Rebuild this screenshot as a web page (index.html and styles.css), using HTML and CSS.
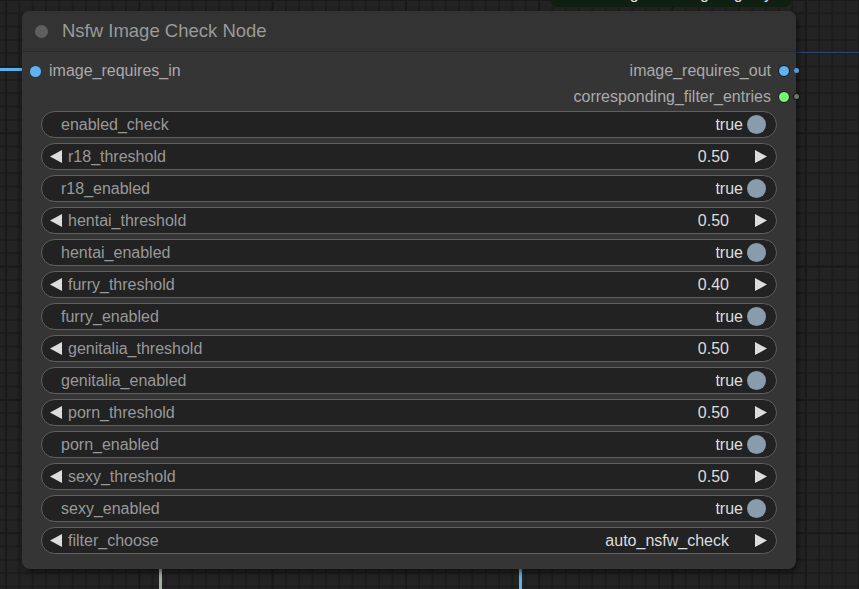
FILE: index.html
```html
<!DOCTYPE html>
<html>
<head>
<meta charset="utf-8">
<link rel="stylesheet" href="styles.css">
</head>
<body>
<div class="canvas">
  <div class="wire wire-in"></div>
  <div class="wire wire-h"></div>
  <div class="wire wire-v1"></div>
  <div class="wire wire-v2"></div>
  <div class="other-node"><span class="other-text">Image Filtering Registry</span></div>

  <div class="node">
    <div class="title">
      <span class="title-dot"></span>
      <span class="title-text">Nsfw Image Check Node</span>
    </div>
    <div class="slots">
      <div class="slot-row">
        <div class="slot slot-in"><span class="dot dot-blue"></span><span class="slot-label">image_requires_in</span></div>
        <div class="slot slot-out"><span class="slot-label">image_requires_out</span><span class="dot dot-blue dot-out"></span></div>
      </div>
      <div class="slot-row slot-row-end">
        <div class="slot slot-out"><span class="slot-label">corresponding_filter_entries</span><span class="dot dot-green dot-out"></span></div>
      </div>
    </div>

    <div class="widgets">
      <div class="w toggle"><span class="w-label">enabled_check</span><span class="w-value">true</span><span class="knob"></span></div>
      <div class="w num"><svg class="arr" viewBox="0 0 12 13"><polygon points="12,0 12,13 0,6.5"/></svg><span class="w-label">r18_threshold</span><span class="w-value">0.50</span><svg class="arr arr-r" viewBox="0 0 12 13"><polygon points="0,0 0,13 12,6.5"/></svg></div>
      <div class="w toggle"><span class="w-label">r18_enabled</span><span class="w-value">true</span><span class="knob"></span></div>
      <div class="w num"><svg class="arr" viewBox="0 0 12 13"><polygon points="12,0 12,13 0,6.5"/></svg><span class="w-label">hentai_threshold</span><span class="w-value">0.50</span><svg class="arr arr-r" viewBox="0 0 12 13"><polygon points="0,0 0,13 12,6.5"/></svg></div>
      <div class="w toggle"><span class="w-label">hentai_enabled</span><span class="w-value">true</span><span class="knob"></span></div>
      <div class="w num"><svg class="arr" viewBox="0 0 12 13"><polygon points="12,0 12,13 0,6.5"/></svg><span class="w-label">furry_threshold</span><span class="w-value">0.40</span><svg class="arr arr-r" viewBox="0 0 12 13"><polygon points="0,0 0,13 12,6.5"/></svg></div>
      <div class="w toggle"><span class="w-label">furry_enabled</span><span class="w-value">true</span><span class="knob"></span></div>
      <div class="w num"><svg class="arr" viewBox="0 0 12 13"><polygon points="12,0 12,13 0,6.5"/></svg><span class="w-label">genitalia_threshold</span><span class="w-value">0.50</span><svg class="arr arr-r" viewBox="0 0 12 13"><polygon points="0,0 0,13 12,6.5"/></svg></div>
      <div class="w toggle"><span class="w-label">genitalia_enabled</span><span class="w-value">true</span><span class="knob"></span></div>
      <div class="w num"><svg class="arr" viewBox="0 0 12 13"><polygon points="12,0 12,13 0,6.5"/></svg><span class="w-label">porn_threshold</span><span class="w-value">0.50</span><svg class="arr arr-r" viewBox="0 0 12 13"><polygon points="0,0 0,13 12,6.5"/></svg></div>
      <div class="w toggle"><span class="w-label">porn_enabled</span><span class="w-value">true</span><span class="knob"></span></div>
      <div class="w num"><svg class="arr" viewBox="0 0 12 13"><polygon points="12,0 12,13 0,6.5"/></svg><span class="w-label">sexy_threshold</span><span class="w-value">0.50</span><svg class="arr arr-r" viewBox="0 0 12 13"><polygon points="0,0 0,13 12,6.5"/></svg></div>
      <div class="w toggle"><span class="w-label">sexy_enabled</span><span class="w-value">true</span><span class="knob"></span></div>
      <div class="w num"><svg class="arr" viewBox="0 0 12 13"><polygon points="12,0 12,13 0,6.5"/></svg><span class="w-label">filter_choose</span><span class="w-value">auto_nsfw_check</span><svg class="arr arr-r" viewBox="0 0 12 13"><polygon points="0,0 0,13 12,6.5"/></svg></div>
    </div>

    <span class="stub stub-blue"></span>
    <span class="stub stub-gray"></span>
  </div>
</div>
</body>
</html>
```

FILE: styles.css
```css
html, body {
  margin: 0;
  padding: 0;
}

body {
  width: 859px;
  height: 589px;
  overflow: hidden;
  font-family: "Liberation Sans", Arial, sans-serif;
}

.canvas {
  position: relative;
  width: 859px;
  height: 589px;
  overflow: hidden;
  background-color: #232323;
  background-image:
    linear-gradient(#191919 2px, transparent 2px),
    linear-gradient(90deg, #191919 2px, transparent 2px),
    linear-gradient(#1c1c1c 2px, transparent 2px),
    linear-gradient(90deg, #1c1c1c 2px, transparent 2px);
  background-size: 133.333px 133.333px, 133.333px 133.333px, 13.333px 13.333px, 13.333px 13.333px;
  background-position: 5px -1px, 5px -1px, 5px -1px, 5px -1px;
}

.wire {
  position: absolute;
}

.wire-in {
  left: 0;
  top: 68px;
  width: 30px;
  height: 3px;
  background: #5bb0ee;
}

.wire-h {
  left: 700px;
  top: 52px;
  width: 159px;
  height: 1px;
  background: #2b4a72;
}

.wire-v1 {
  left: 159px;
  top: 540px;
  width: 3px;
  height: 60px;
  background: #9fb09e;
}

.wire-v2 {
  left: 519px;
  top: 540px;
  width: 3px;
  height: 60px;
  background: #5bb0ee;
}

.other-node {
  position: absolute;
  left: 550px;
  top: -30px;
  width: 242px;
  height: 37px;
  background: #0f1f12;
  border-radius: 8px;
  overflow: hidden;
}

.other-text {
  position: absolute;
  right: 20px;
  top: 15px;
  font-size: 16px;
  color: #ddd;
  white-space: nowrap;
}

.node {
  position: absolute;
  left: 22px;
  top: 11px;
  width: 774px;
  height: 558px;
  box-sizing: border-box;
  background: #353535;
  border-radius: 8px;
  box-shadow: 2px 3px 6px rgba(0, 0, 0, 0.55);
  display: flex;
  flex-direction: column;
}

.title {
  height: 40px;
  display: flex;
  align-items: center;
  padding-left: 13px;
  background: #333333;
  border-radius: 8px 8px 0 0;
  border-bottom: 1px solid #2a2a2a;
}

.title-dot {
  width: 13px;
  height: 13px;
  border-radius: 50%;
  background: #5f5f5f;
  margin-right: 14px;
}

.title-text {
  font-size: 18.5px;
  color: #9a9a9a;
  line-height: 1;
}

.slots {
  padding-top: 6px;
  height: 53px;
  display: flex;
  flex-direction: column;
}

.slot-row {
  height: 26px;
  display: flex;
  justify-content: space-between;
  align-items: center;
}

.slot-row-end {
  justify-content: flex-end;
}

.slot {
  display: flex;
  align-items: center;
}

.slot-in {
  padding-left: 8px;
  gap: 8px;
}

.slot-out {
  padding-right: 6px;
  gap: 7px;
}

.slot-label {
  font-size: 16px;
  color: #aaaaaa;
}

.dot {
  display: block;
  width: 11px;
  height: 11px;
  border-radius: 50%;
  box-sizing: border-box;
}

.dot-blue {
  background: #5db3f4;
}

.dot-green {
  background: #77f675;
}

.dot-out {
  width: 12px;
  height: 12px;
  border: 1.5px solid #141414;
}

.widgets {
  display: flex;
  flex-direction: column;
  gap: 5px;
  padding: 0 19px;
}

.w {
  height: 27px;
  box-sizing: border-box;
  border: 1px solid #616161;
  border-radius: 14px;
  background: #222222;
  display: flex;
  align-items: center;
  font-size: 16px;
}

.w-label {
  color: #999999;
  flex: 1;
  white-space: nowrap;
}

.w-value {
  color: #dddddd;
  white-space: nowrap;
}

.toggle {
  padding-left: 19px;
  padding-right: 10px;
}

.toggle .w-value {
  margin-right: 4px;
}

.knob {
  width: 19px;
  height: 19px;
  border-radius: 50%;
  background: #8a9bae;
}

.num {
  padding-left: 8px;
  padding-right: 9px;
}

.arr {
  width: 12px;
  height: 13px;
  fill: #dddddd;
  margin-right: 6px;
  flex: none;
}

.arr-r {
  margin-right: 0;
  margin-left: 26px;
}

.stub {
  position: absolute;
  width: 5px;
  height: 5px;
  border-radius: 50%;
  right: -3px;
}

.stub-blue {
  top: 57px;
  background: #4f9ad8;
}

.stub-gray {
  top: 83px;
  background: #6a756a;
  box-shadow: 0 0 0 1px #151515;
}
```
